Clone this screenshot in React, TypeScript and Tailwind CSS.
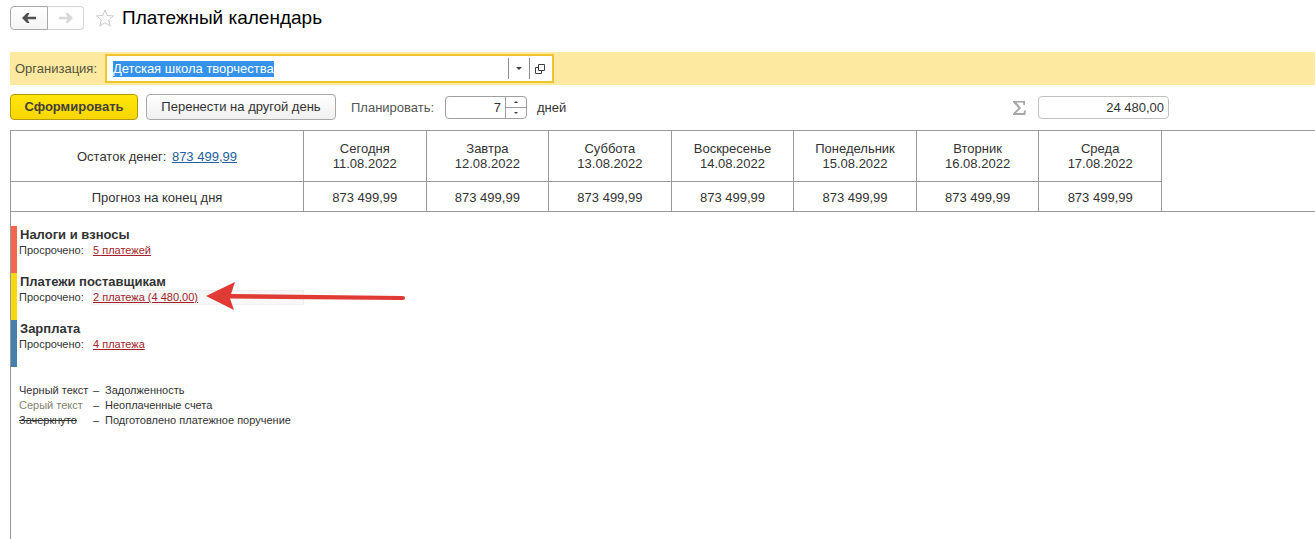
import React, { useEffect, useRef, useState } from 'react';

interface Day {
  name: string;
  date: string;
  forecast: string;
}

interface PaymentGroup {
  title: string;
  color: string;
  link: string;
  active?: boolean;
}

const days: Day[] = [
  { name: 'Сегодня', date: '11.08.2022', forecast: '873 499,99' },
  { name: 'Завтра', date: '12.08.2022', forecast: '873 499,99' },
  { name: 'Суббота', date: '13.08.2022', forecast: '873 499,99' },
  { name: 'Воскресенье', date: '14.08.2022', forecast: '873 499,99' },
  { name: 'Понедельник', date: '15.08.2022', forecast: '873 499,99' },
  { name: 'Вторник', date: '16.08.2022', forecast: '873 499,99' },
  { name: 'Среда', date: '17.08.2022', forecast: '873 499,99' },
];

const groups: PaymentGroup[] = [
  { title: 'Налоги и взносы', color: 'bg-[#f4664f]', link: '5 платежей' },
  { title: 'Платежи поставщикам', color: 'bg-[#f8d80f]', link: '2 платежа (4 480,00)', active: true },
  { title: 'Зарплата', color: 'bg-[#457fae]', link: '4 платежа' },
];

const legend = [
  { label: 'Черный текст', style: '', text: 'Задолженность' },
  { label: 'Серый текст', style: 'text-[#82836f]', text: 'Неоплаченные счета' },
  { label: 'Зачеркнуто', style: 'line-through', text: 'Подготовлено платежное поручение' },
];

const BackIcon: React.FC = () => (
  <svg width="14" height="10" viewBox="0 0 14 10" fill="currentColor">
    <path d="M0 5L5 0h2.500L5.500 3.700H14v2.600H5.500l2 3.700H5z" />
  </svg>
);

const Header: React.FC = () => (
  <header className="flex h-9 items-center">
    <div className="flex h-6">
      <button aria-label="Назад" className="flex w-[38px] items-center justify-center rounded-l-sm border border-[#a8a8a8] bg-linear-to-b from-white to-[#f4f4f4] text-[#505050]">
        <BackIcon />
      </button>
      <button aria-label="Вперед" disabled className="flex w-9 items-center justify-center rounded-r-sm border border-l-0 border-[#d4d4d4] bg-white text-[#d8d8d8]">
        <span className="rotate-180">
          <BackIcon />
        </span>
      </button>
    </div>
    <button aria-label="Избранное" className="ml-3 text-[#c8c8c8]">
      <svg width="18" height="18" viewBox="0 0 18 18" fill="none" stroke="currentColor">
        <path d="M9 1l2.200 5.500 6.200.4-4.700 4 1.500 6.100L9 13.700 3.800 17l1.500-6.100-4.700-4 6.200-.4z" />
      </svg>
    </button>
    <h1 className="ml-2 text-[19px] text-black">Платежный календарь</h1>
  </header>
);

const OrganizationBar: React.FC = () => {
  const [organization, setOrganization] = useState('Детская школа творчества');
  const inputRef = useRef<HTMLInputElement>(null);

  useEffect(() => {
    inputRef.current?.focus();
    inputRef.current?.select();
  }, []);

  return (
    <div className="mt-4 flex h-[33px] items-center bg-[#fde9a0] pl-[5px]">
      <label htmlFor="organization" className="w-[90px] text-[#57533f]">Организация:</label>
      <div className="flex h-[29px] w-[449px] border-2 border-[#efc52f] bg-white p-[2px]">
        <input
          id="organization"
          ref={inputRef}
          value={organization}
          onChange={e => setOrganization(e.target.value)}
          className="min-w-0 flex-1 pl-1 leading-4 outline-none selection:bg-[#3592ea] selection:text-white"
        />
        <button aria-label="Выбрать из списка" className="flex w-[21px] items-center justify-center border-l border-[#8c8c8c]">
          <svg width="6" height="3" viewBox="0 0 6 3" fill="#404040">
            <path d="M0 0h6L3 3z" />
          </svg>
        </button>
        <button aria-label="Открыть" className="flex w-[21px] items-center justify-center border-l border-[#8c8c8c]">
          <svg width="10" height="10" viewBox="0 0 10 10" fill="none" stroke="#404040">
            <path d="M3.500.5h6v6h-6zM3 3.500H.5v6h6V7" />
          </svg>
        </button>
      </div>
    </div>
  );
};

const Toolbar: React.FC = () => {
  const [planDays, setPlanDays] = useState(7);

  return (
    <div className="mt-[9px] flex h-[26px] items-center">
      <button className="h-full w-32 rounded-sm border border-[#b39a0d] bg-linear-to-b from-[#ffe60a] to-[#f8d600] font-bold text-[#454036]">
        Сформировать
      </button>
      <button className="ml-2 h-full w-[190px] rounded-sm border border-[#a8a8a8] bg-linear-to-b from-white to-[#f0f0f0]">
        Перенести на другой день
      </button>
      <label htmlFor="plan-days" className="ml-[15px] w-[94px] pt-px text-[#555555]">Планировать:</label>
      <div className="flex h-[23px] w-[82px] overflow-hidden rounded-sm border border-[#a0a0a0]">
        <input
          id="plan-days"
          inputMode="numeric"
          value={planDays}
          onChange={e => setPlanDays(Number(e.target.value) || 0)}
          className="min-w-0 flex-1 pt-px pr-1 text-right outline-none"
        />
        <div className="flex w-[21px] flex-col border-l border-[#a0a0a0]">
          <button aria-label="Больше" onClick={() => setPlanDays(planDays + 1)} className="flex flex-1 items-center justify-center border-b border-[#a0a0a0]">
            <svg width="4" height="2" viewBox="0 0 4 2" fill="#404040">
              <path d="M2 0l2 2H0z" />
            </svg>
          </button>
          <button aria-label="Меньше" onClick={() => setPlanDays(planDays - 1)} className="flex flex-1 items-center justify-center">
            <svg width="4" height="2" viewBox="0 0 4 2" fill="#404040">
              <path d="M0 0h4L2 2z" />
            </svg>
          </button>
        </div>
      </div>
      <span className="ml-[10px] pt-px">дней</span>
      <label htmlFor="total" className="mr-3 ml-auto pt-px text-[#a6a6a6]">
        <svg width="13" height="14" viewBox="0 0 13 14" fill="currentColor" role="img" aria-label="Сумма">
          <path d="M0 0h12v4h-1.500L10 1.500H3.500L8 7l-5 5h7.500l.8-2.500H13L12.300 14H0v-1.500L5.500 7 0 1.300z" />
        </svg>
      </label>
      <input id="total" readOnly value="24 480,00" className="mr-[146px] h-[23px] w-[131px] rounded-sm border border-[#c0c0c0] pt-px pr-1 text-right outline-none" />
    </div>
  );
};

const ForecastTable: React.FC = () => (
  <div className="mt-[10px] flex">
    <table className="w-[1152px] shrink-0 table-fixed border-collapse text-center leading-[15px]">
      <thead>
        <tr className="h-[51px]">
          <th className="w-[293px] border border-[#999999] font-normal">
            Остаток денег: <a href="#balance" className="ml-[2px] text-[#24609f] underline">873 499,99</a>
          </th>
          {days.map(day => (
            <th key={day.date} className="border border-[#999999] font-normal">
              {day.name}
              <br />
              {day.date}
            </th>
          ))}
        </tr>
      </thead>
      <tbody>
        <tr className="h-[30px]">
          <th className="border border-[#999999] pt-[2px] font-normal">Прогноз на конец дня</th>
          {days.map(day => (
            <td key={day.date} className="border border-[#999999] pt-[2px]">{day.forecast}</td>
          ))}
        </tr>
      </tbody>
    </table>
    <div className="flex-1 border-y border-[#999999]" />
  </div>
);

const PaymentGroupRow: React.FC<{ group: PaymentGroup }> = ({ group }) => (
  <section className="flex h-[47px]">
    <div className={`w-[6px] ${group.color}`} />
    <div className="pl-[2px]">
      <h2 className="pl-px leading-[17px] font-bold">{group.title}</h2>
      <div className="flex text-[11px] leading-[15px]">
        <span className="w-[72px]">Просрочено:</span>
        <div className={`relative w-[213px] pl-[2px] ${group.active ? 'bg-[#f7f7f7] outline -outline-offset-1 outline-[#f0eeee]' : ''}`}>
          <a href="#payments" className="text-[#a51f2c] underline">{group.link}</a>
          {group.active && (
            <svg className="absolute -top-2 left-[115px]" width="200" height="30" viewBox="0 0 200 30" fill="#e03a34">
              <path d="M0 14L29 0l-4 12 172 2a2 2 0 0 1 0 4L24 16.500 28 28z" />
            </svg>
          )}
        </div>
      </div>
    </div>
  </section>
);

const Legend: React.FC = () => (
  <dl className="mt-4 pl-2 text-[11px] leading-[15px]">
    {legend.map(item => (
      <div key={item.label} className="flex">
        <dt className="w-[74px]">
          <span className={item.style}>{item.label}</span>
        </dt>
        <dd className="flex">
          <span className="w-3">–</span>
          {item.text}
        </dd>
      </div>
    ))}
  </dl>
);

const App: React.FC = () => (
  <div className="flex min-h-screen flex-col overflow-x-hidden bg-white pl-[10px] font-['Liberation_Sans',Arial,sans-serif] text-[13px] text-[#333333]">
    <Header />
    <OrganizationBar />
    <Toolbar />
    <ForecastTable />
    <main className="flex-1 border-l border-[#999999] pt-[14px]">
      {groups.map(group => (
        <PaymentGroupRow key={group.title} group={group} />
      ))}
      <Legend />
    </main>
  </div>
);

export default App;
